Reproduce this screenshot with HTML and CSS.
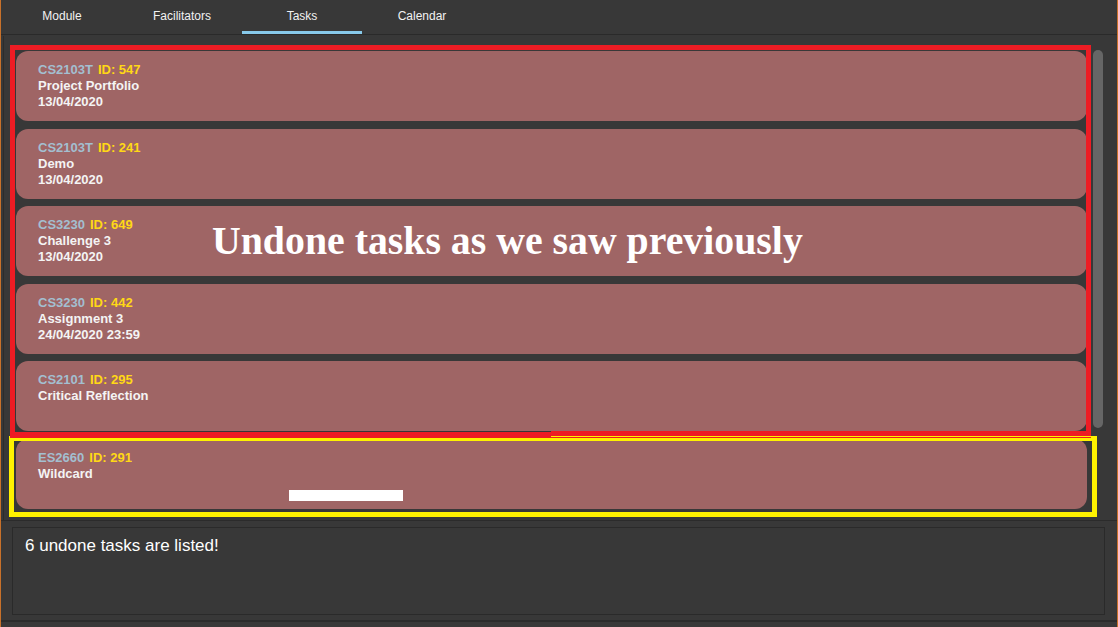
FILE: index.html
```html
<!DOCTYPE html>
<html>
<head>
<meta charset="utf-8">
<link rel="stylesheet" href="styles.css">
</head>
<body>
<div class="app">
  <div class="tabs">
    <div class="tab">Module</div>
    <div class="tab">Facilitators</div>
    <div class="tab active">Tasks</div>
    <div class="tab">Calendar</div>
  </div>
  <div class="list-panel">
    <div class="cards">
      <div class="card">
        <div class="line"><span class="code">CS2103T</span><span class="id">ID: 547</span></div>
        <div class="line">Project Portfolio</div>
        <div class="line">13/04/2020</div>
      </div>
      <div class="card">
        <div class="line"><span class="code">CS2103T</span><span class="id">ID: 241</span></div>
        <div class="line">Demo</div>
        <div class="line">13/04/2020</div>
      </div>
      <div class="card">
        <div class="line"><span class="code">CS3230</span><span class="id">ID: 649</span></div>
        <div class="line">Challenge 3</div>
        <div class="line">13/04/2020</div>
      </div>
      <div class="card">
        <div class="line"><span class="code">CS3230</span><span class="id">ID: 442</span></div>
        <div class="line">Assignment 3</div>
        <div class="line">24/04/2020 23:59</div>
      </div>
      <div class="card">
        <div class="line"><span class="code">CS2101</span><span class="id">ID: 295</span></div>
        <div class="line">Critical Reflection</div>
      </div>
      <div class="card">
        <div class="line"><span class="code">ES2660</span><span class="id">ID: 291</span></div>
        <div class="line">Wildcard</div>
      </div>
    </div>
    <div class="scrollbar"></div>
  </div>
  <div class="result-panel">
    <div class="result-box">6 undone tasks are listed!</div>
  </div>
</div>
<div class="mark-yellow"></div>
<div class="mark-red"></div>
<div class="mark-red-tail"></div>
<div class="white-bar"></div>
<div class="caption">Undone tasks as we saw previously</div>
</body>
</html>
```
FILE: styles.css
```css
html, body {
  margin: 0;
  padding: 0;
}
body {
  width: 1118px;
  height: 627px;
  background: #383838;
  font-family: "Liberation Sans", Arial, sans-serif;
  position: relative;
  overflow: hidden;
  box-sizing: border-box;
  border-left: 1px solid #c8712a;
  border-right: 1px solid #c8712a;
}
.app {
  display: flex;
  flex-direction: column;
  height: 627px;
}
.tabs {
  display: flex;
  height: 35px;
  padding-left: 1px;
  border-bottom: 1px solid #2a2a2a;
  box-sizing: border-box;
  flex: none;
}
.tab {
  width: 120px;
  height: 34px;
  box-sizing: border-box;
  border-bottom: 3px solid transparent;
  color: #f2f2f2;
  font-size: 12px;
  line-height: 14px;
  padding-top: 9px;
  text-align: center;
}
.tab.active {
  border-bottom-color: #87c9ea;
}
.list-panel {
  flex: none;
  height: 484px;
  margin: 1px 0 0 2px;
  border-left: 1px solid #2c2c2c;
  box-sizing: border-box;
  display: flex;
  padding: 15px 0 0 12px;
  gap: 6px;
}
.cards {
  width: 1071px;
  display: flex;
  flex-direction: column;
  gap: 7.6px;
}
.card {
  height: 70px;
  box-sizing: border-box;
  background: #9f6565;
  border-radius: 12px;
  padding: 11px 0 0 22px;
  color: #f4f4f4;
  font-size: 13px;
  font-weight: bold;
  line-height: 16px;
}
.code {
  color: #a3bfd0;
}
.id {
  color: #ffd815;
  margin-left: 5px;
}
.scrollbar {
  width: 10px;
  height: 378px;
  margin-top: -1px;
  border-radius: 5px;
  background: #666666;
}
.result-panel {
  flex: none;
  height: 102px;
  box-sizing: border-box;
  border-top: 1px solid #2b2b2b;
  border-bottom: 2px solid #2b2b2b;
  padding: 6px 12px 0 11px;
}
.result-box {
  height: 88px;
  box-sizing: border-box;
  border: 1px solid #2a2a2a;
  padding: 8px 12px;
  color: #ffffff;
  font-size: 17px;
  line-height: 20px;
}
.mark-yellow {
  position: absolute;
  left: 8px;
  top: 436px;
  width: 1088px;
  height: 81px;
  box-sizing: border-box;
  border: 5px solid #fff200;
}
.mark-red {
  position: absolute;
  left: 9px;
  top: 45px;
  width: 1081px;
  height: 393px;
  box-sizing: border-box;
  border: 5px solid #ed1c24;
  border-bottom-width: 6px;
}
.mark-red-tail {
  position: absolute;
  left: 550px;
  top: 431px;
  width: 540px;
  height: 6px;
  background: #ed1c24;
  border-bottom: 1px solid #fff200;
  box-sizing: border-box;
}
.white-bar {
  position: absolute;
  left: 288px;
  top: 490px;
  width: 114px;
  height: 11px;
  background: #ffffff;
}
.caption {
  position: absolute;
  left: 211px;
  top: 221px;
  font-family: "Liberation Serif", "Times New Roman", serif;
  font-weight: bold;
  font-size: 39.8px;
  line-height: 40px;
  color: #ffffff;
  white-space: nowrap;
}
```
